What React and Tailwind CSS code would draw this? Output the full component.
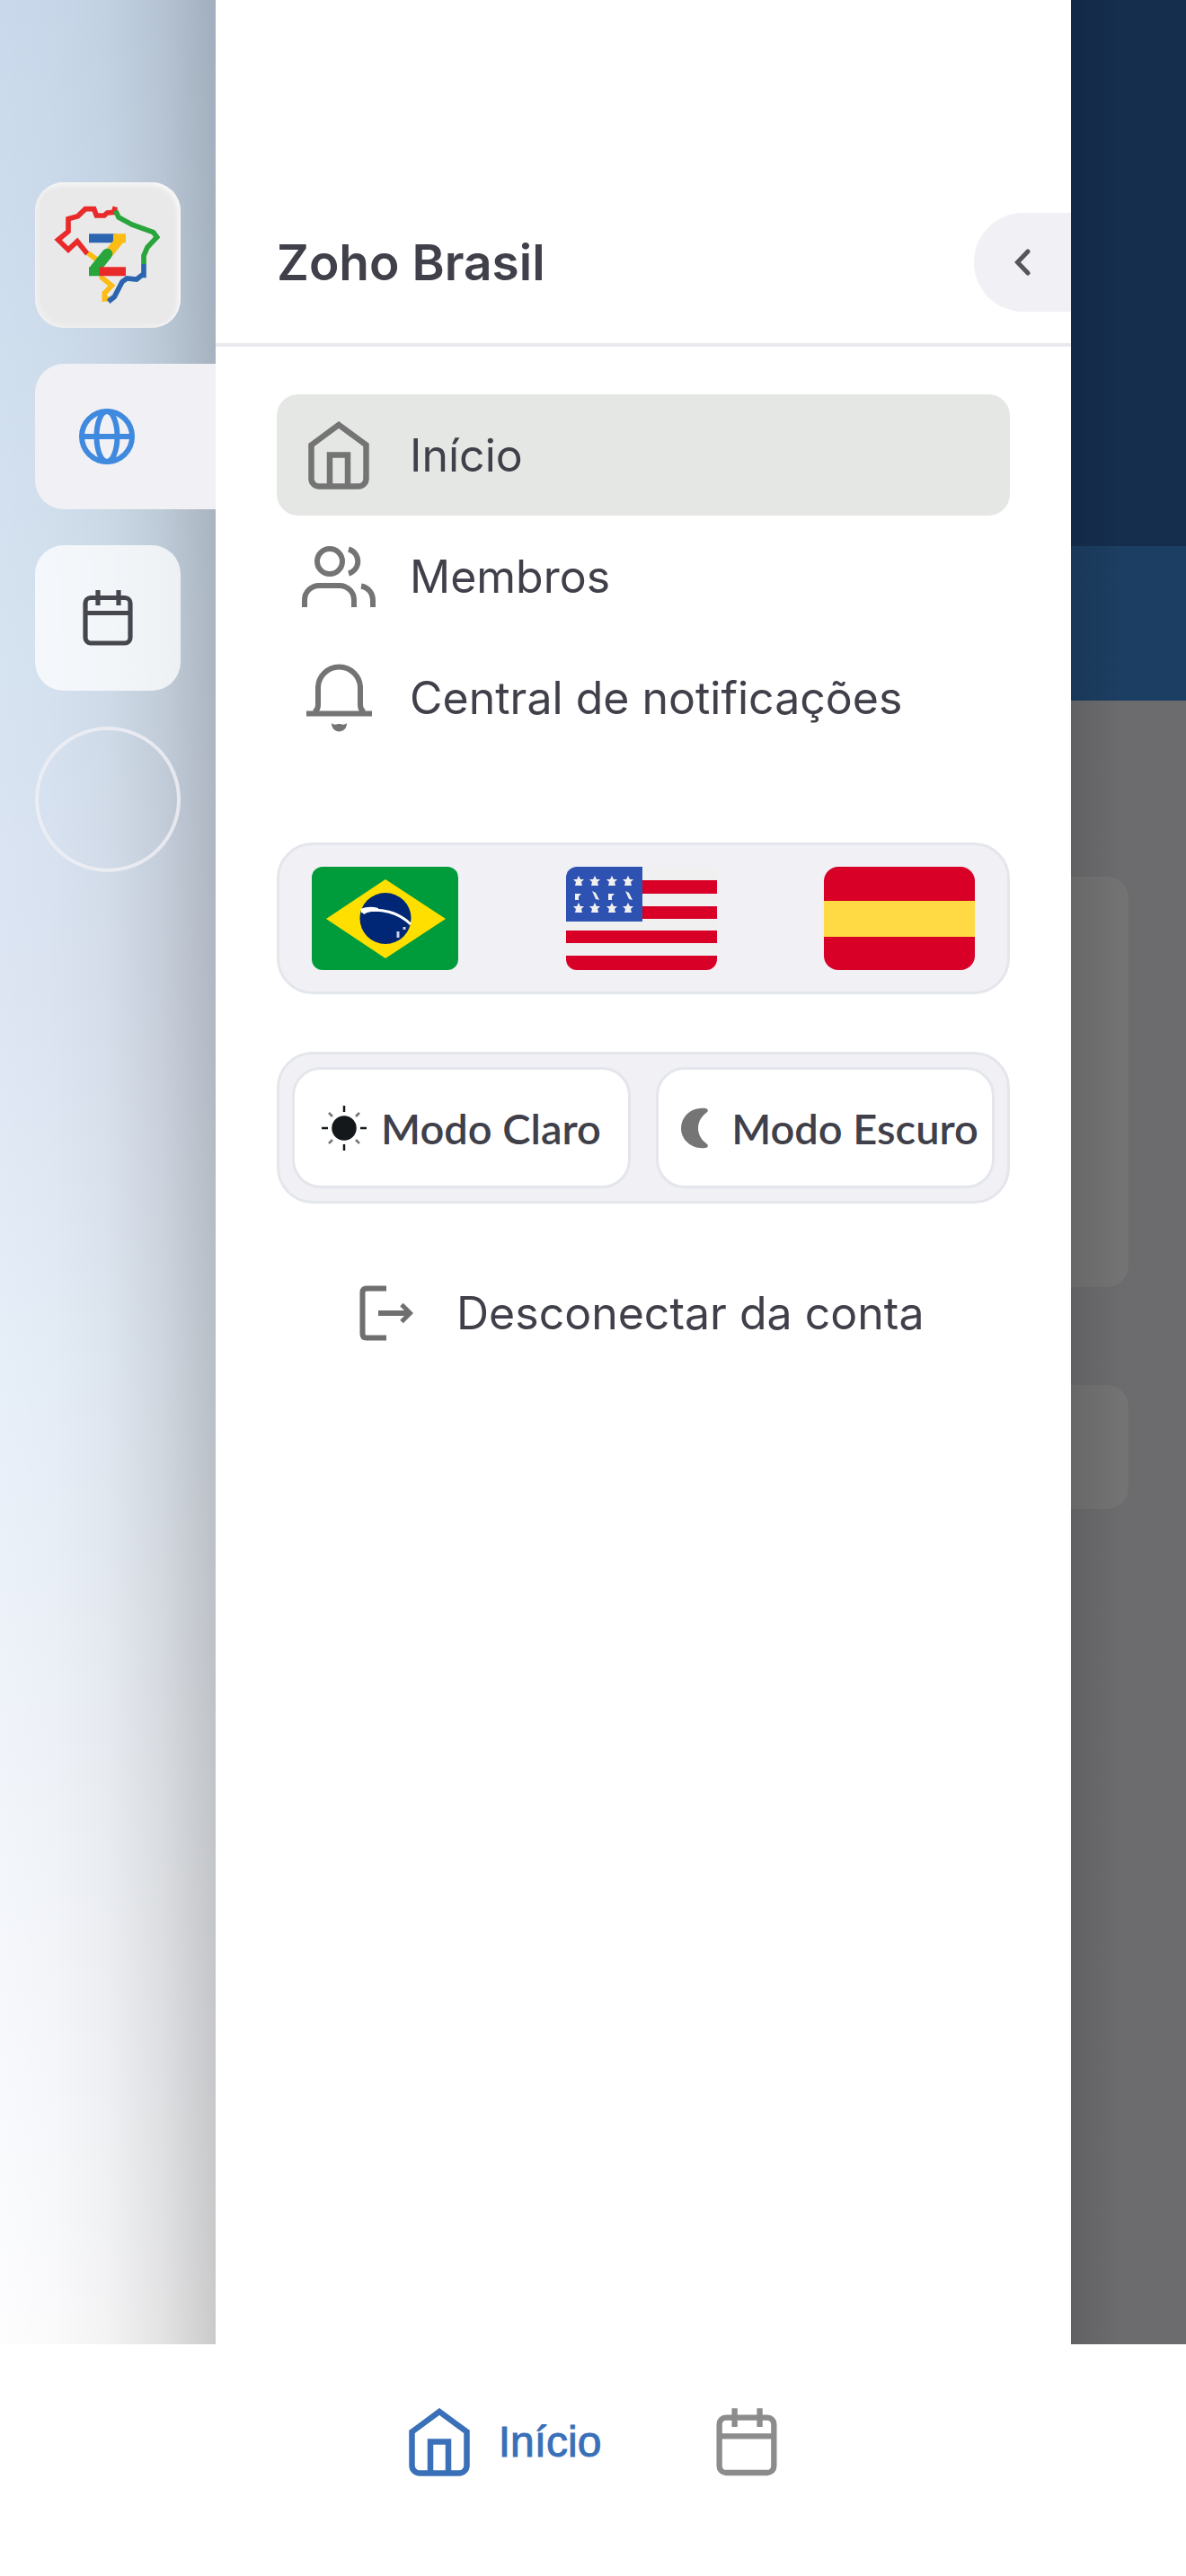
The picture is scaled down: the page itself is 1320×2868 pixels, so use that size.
const BOX = "rounded-[40px] border-[3px] border-[#e3e6eb] bg-[#f0f0f5]";

function HomeIcon({ className }) {
  return (
    <svg viewBox="0 0 68 76" className={className} fill="none" stroke="currentColor" strokeWidth="6.5" aria-hidden="true">
      <path d="M3.500 26.500 34 4l30.500 22.500V64a8.500 8.500 0 0 1-8.500 8.500H12A8.500 8.500 0 0 1 3.500 64Z" />
      <path d="M24 72V37.500h20V72" />
    </svg>
  );
}

function MembersIcon({ className }) {
  return (
    <svg viewBox="0 0 82 68" className={className} fill="none" stroke="currentColor" strokeWidth="6" aria-hidden="true">
      <circle cx="31" cy="17" r="14" />
      <path d="M52 3.500a14 14 0 0 1 0 27" />
      <path d="M3 68v-8a16 16 0 0 1 16-16h23a16 16 0 0 1 16 16v8" />
      <path d="M66 44.500a15.500 15.500 0 0 1 13 15.500v8" />
    </svg>
  );
}

function BellIcon({ className }) {
  return (
    <svg viewBox="0 0 75 76" className={className} fill="none" stroke="currentColor" strokeWidth="6" aria-hidden="true">
      <path d="M10 54q4-3 4-8V27a23.500 23.500 0 0 1 47 0v19q0 5 4 8" />
      <path d="M1 55.500h73" />
      <path d="M29 66c3 3 6 1 8.500 1s5.500 2 8.500-1c0 6-4 9.500-8.500 9.500S29 72 29 66Z" fill="currentColor" stroke="none" />
    </svg>
  );
}

function CalendarIcon({ className }) {
  return (
    <svg viewBox="0 0 56 62" className={className} fill="none" stroke="currentColor" strokeWidth="5.2" aria-hidden="true">
      <rect x="3" y="8.500" width="50" height="50.500" rx="6" />
      <path d="M3 25.500h50M17 0v17M40 0v17" />
    </svg>
  );
}

function GlobeIcon({ className }) {
  return (
    <svg viewBox="0 0 62 62" className={className} fill="none" stroke="currentColor" strokeWidth="6" aria-hidden="true">
      <circle cx="31" cy="31" r="28" />
      <ellipse cx="31" cy="31" rx="11.500" ry="28" />
      <path d="M3 31h56" />
    </svg>
  );
}

function LogoutIcon({ className }) {
  return (
    <svg viewBox="0 0 60 62" className={className} fill="none" stroke="currentColor" strokeWidth="6" aria-hidden="true">
      <path d="M30 3.500H8Q3.500 3.500 3.500 8v46q0 4.500 4.500 4.500h22" />
      <path d="M21 31h36" />
      <path d="m47 21.500 9.500 9.500-9.500 9.500" strokeWidth="5" />
    </svg>
  );
}

function SunIcon({ className }) {
  return (
    <svg viewBox="0 0 50 50" className={className} fill="#14181b" stroke="#14181b" strokeWidth="2.5" aria-hidden="true">
      <circle cx="25" cy="25" r="12.500" />
      <path d="M25 0v7M25 43v7M0 25h7M43 25h7" />
      <path d="m8 8 4 4M38 38l4 4M8 42l4-4M38 12l4-4" strokeOpacity="0.6" />
    </svg>
  );
}

function MoonIcon({ className }) {
  return (
    <svg viewBox="0 0 50 50" className={className} fill="#757575" aria-hidden="true">
      <path d="M37 3C23 1 10 11 10 25s13 24 27 22c3 0 4-3 1-5C26 33 26 17 38 8c3-2 2-5-1-5Z" />
    </svg>
  );
}

function CommunityLogo() {
  return (
    <svg viewBox="117 70 486 486" className="size-full" fill="none" strokeWidth="17" role="img" aria-label="Zoho Brasil">
      <path stroke="#e92a2a" d="m385 152-5 18-22 2-10 9h-26l-8-22h-29l-25 24-32 9v42l-34 28 34 33 30-28 34 42" />
      <path stroke="#fbbc14" d="m294 306 32 24M335 384l38 31-24 25v20h20" />
      <path stroke="#2b65b0" d="m362 468 20-16 26-50 16-11 32 3 18-14h6v-38" />
      <path stroke="#28a63c" d="M480 343v-28l12-28 32-34-12-16-72-26-44-24-10-22" />
      <path stroke="#2b65b0" strokeWidth="30" d="M297 257h92" />
      <path stroke="#fbbc14" strokeWidth="30" d="M378 257h42M408 252l-44 54" />
      <path stroke="#28a63c" strokeWidth="36" strokeLinecap="round" d="m358 309-40 50" />
      <path stroke="#28a63c" strokeWidth="30" d="M297 368h44" />
      <path stroke="#e92a2a" strokeWidth="30" d="M332 368h88" />
    </svg>
  );
}

function BrazilFlag() {
  return (
    <svg viewBox="0 0 163 115" className="h-[115px] w-[163px] rounded-xl" aria-hidden="true">
      <path fill="#009c3b" d="M0 0h163v115H0z" />
      <path fill="#ffdf00" d="m82 14 67 44-67 44-66-44z" />
      <circle cx="82" cy="57.500" r="28.500" fill="#002776" />
      <path d="M55 50c22-5 42 1 55 14" fill="none" stroke="#fff" strokeWidth="3" />
      <path d="M54 47q10-4 20-1v4q-10-1-16 3z" fill="#fff" />
      <path d="M96 72v7M103 67v3" stroke="#c9d3e8" strokeWidth="3" />
    </svg>
  );
}

const STARS = [16, 46].flatMap((y) => [14, 32, 51, 69].map((x) => [x, y]));

function UsaFlag() {
  return (
    <svg viewBox="0 0 168 115" className="h-[115px] w-[168px] rounded-xl" aria-hidden="true">
      <path fill="#f0f0f0" d="M0 0h168v115H0z" />
      <path fill="#d80027" d="M0 15h168v15H0zM0 44h168v14H0zM0 71h168v14H0zM0 99h168v16H0z" />
      <path fill="#2e52b2" d="M0 0h85v61H0z" />
      {STARS.map(([x, y]) => (
        <path key={`${x}-${y}`} fill="#f0f0f0" d={`M${x - 6} ${y - 2}h4l2-4 2 4h4l-3 3 1 4h-8l1-4z`} />
      ))}
      {[14, 51].map((x) => (
        <path key={x} fill="#f0f0f0" d={`M${x - 4} 30h7l-3 3v4h-4zM${x + 15} 27l4 2 4 8-4-1z`} />
      ))}
    </svg>
  );
}

function SpainFlag() {
  return (
    <svg viewBox="0 0 168 115" className="h-[115px] w-[168px] rounded-2xl" aria-hidden="true">
      <path fill="#d80027" d="M0 0h168v115H0z" />
      <path fill="#ffda44" d="M0 38h168v40H0z" />
    </svg>
  );
}

function Rail() {
  return (
    <aside className="flex w-60 shrink-0 flex-col bg-[linear-gradient(to_right,rgba(0,0,0,0)_0%,rgba(0,0,0,0.01)_25%,rgba(0,0,0,0.04)_50%,rgba(0,0,0,0.1)_75%,rgba(0,0,0,0.2)_100%),linear-gradient(to_bottom,#c9d9eb_0%,#d4e2f0_25%,#dde5f3_42%,#e6eef8_58%,#f2f5fa_78%,#fdfdfe_100%)] pt-[203px] pl-[39px]">
      <div className="flex flex-col gap-10">
        <button className="size-[162px] overflow-hidden rounded-[32px] bg-[#e9e9e9] shadow-[inset_-3px_3px_5px_#f8f8f8,inset_3px_-3px_5px_#f0f0f0]">
          <CommunityLogo />
        </button>
        <button aria-label="Comunidade" className="flex h-[162px] items-center rounded-l-[32px] bg-[#f0f0f5] pl-[49px] text-[#3f8ade]">
          <GlobeIcon className="size-[62px]" />
        </button>
        <button aria-label="Eventos" className="flex size-[162px] items-center justify-center rounded-[32px] bg-white/75 text-[#46464f]">
          <CalendarIcon className="h-[62px] w-14" />
        </button>
        <button aria-label="Adicionar" className="size-[162px] rounded-full border-4 border-[#f0f0f5]/80" />
      </div>
    </aside>
  );
}

const LINKS = [
  { label: "Início", Icon: HomeIcon, size: "h-[76px] w-[68px]", active: true },
  { label: "Membros", Icon: MembersIcon, size: "h-[68px] w-[82px]" },
  { label: "Central de notificações", Icon: BellIcon, size: "h-[76px] w-[75px]" },
];

function Panel() {
  return (
    <section className="flex min-w-0 flex-1 flex-col bg-white text-[#40404a]">
      <header className="flex items-center justify-between border-b-4 border-[#e8eaed] pt-[237px] pb-[35px] pl-[68px]">
        <h1 className="text-[55px] leading-[64px] font-semibold">Zoho Brasil</h1>
        <button aria-label="Fechar menu" className="flex h-[110px] w-[108px] items-center justify-center rounded-l-full bg-[#f0f0f5] text-[#55555b]">
          <svg viewBox="0 0 18 30" className="h-[30px] w-[18px]" fill="none" stroke="currentColor" strokeWidth="5" strokeLinecap="round" aria-hidden="true">
            <path d="M15 3 3.500 15 15 27" />
          </svg>
        </button>
      </header>
      <div className="flex flex-col px-[68px] pt-[53px]">
        <nav className="flex flex-col">
          {LINKS.map(({ label, Icon, size, active }) => (
            <a
              key={label}
              href="#"
              className={`flex h-[135px] items-center gap-[38px] rounded-3xl px-7 text-[50px] leading-[64px] whitespace-nowrap ${active ? "bg-[#e4e7e3]" : ""}`}
            >
              <span className="flex w-[82px] justify-center text-[#747474]">
                <Icon className={size} />
              </span>
              {label}
            </a>
          ))}
        </nav>
        <div className={`mt-[94px] flex h-[169px] items-center justify-between px-9 ${BOX}`}>
          <button aria-label="Português">
            <BrazilFlag />
          </button>
          <button aria-label="English">
            <UsaFlag />
          </button>
          <button aria-label="Español">
            <SpainFlag />
          </button>
        </div>
        <div className={`mt-16 grid h-[169px] grid-cols-2 gap-7 p-[14px] font-['Lato',sans-serif] text-[47px] leading-[64px] font-semibold ${BOX}`}>
          <button className="flex items-center justify-center gap-4 rounded-[32px] border-[3px] border-[#e3e6eb] bg-white whitespace-nowrap">
            <SunIcon className="size-[50px] shrink-0" />
            Modo Claro
          </button>
          <button className="flex items-center justify-center gap-4 rounded-[32px] border-[3px] border-[#e3e6eb] bg-white whitespace-nowrap">
            <MoonIcon className="size-[50px] shrink-0" />
            Modo Escuro
          </button>
        </div>
        <button className="mt-[90px] flex items-center gap-12 pl-[92px] text-[50px] leading-[64px] whitespace-nowrap">
          <LogoutIcon className="h-[62px] w-[60px] text-[#6f6f6f]" />
          Desconectar da conta
        </button>
      </div>
    </section>
  );
}

function Backdrop() {
  return (
    <div className="relative flex w-32 shrink-0 flex-col bg-[#6c6c6e]">
      <div className="h-[608px] bg-[#152e4e]" />
      <div className="h-[172px] bg-[#1c3e62]" />
      <div className="mt-[196px] mr-16 h-[457px] rounded-r-3xl bg-[#737373]" />
      <div className="mt-[109px] mr-16 h-[138px] rounded-r-3xl bg-[#737373]" />
      <div className="absolute inset-y-0 left-0 w-14 bg-gradient-to-r from-black/10 to-transparent" />
    </div>
  );
}

export default function App() {
  return (
    <div className="flex min-h-screen flex-col bg-white font-['Inter',sans-serif]">
      <main className="flex flex-1">
        <Rail />
        <Panel />
        <Backdrop />
      </main>
      <nav className="flex justify-center gap-32 bg-white pt-[71px] pb-[111px] font-['Liberation_Sans',Arial,sans-serif]">
        <a href="#" className="flex items-center gap-8 text-[48px] leading-[64px] text-[#3a70b8] [-webkit-text-stroke:1px_#3a70b8]">
          <HomeIcon className="h-[76px] w-[68px]" />
          Início
        </a>
        <a href="#" aria-label="Calendário" className="text-[#8c8c8c]">
          <CalendarIcon className="h-[76px] w-[68px]" />
        </a>
      </nav>
    </div>
  );
}
